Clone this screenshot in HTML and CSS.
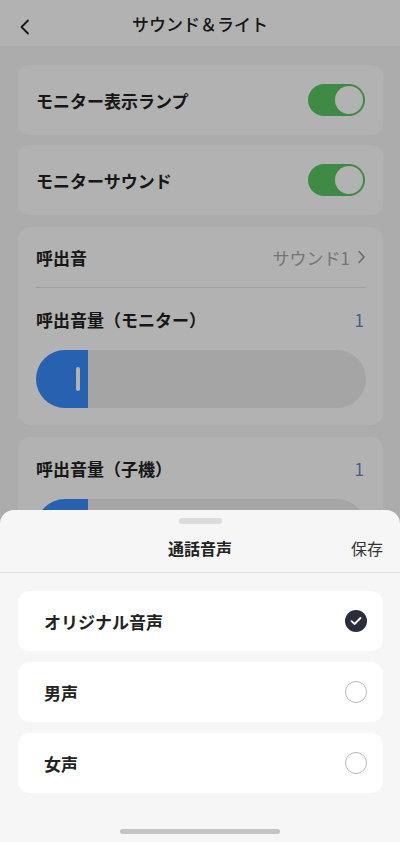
FILE: index.html
```html
<!DOCTYPE html>
<html lang="ja">
<head>
    <meta charset="UTF-8">
    <meta name="viewport" content="width=device-width, initial-scale=1.0">
    <title>サウンド＆ライト</title>
    <link rel="stylesheet" href="styles.css">
</head>
<body>
    <div class="screen">
        <header class="topbar">
            <span class="back">
                <svg width="12" height="16" viewBox="0 0 12 16"><path d="M9 1.5 L2.5 8 L9 14.5" fill="none" stroke="#222" stroke-width="1.8" stroke-linecap="round" stroke-linejoin="round"/></svg>
            </span>
            <h1>サウンド＆ライト</h1>
        </header>

        <main class="content">
            <div class="card row switch-card">
                <span class="label">モニター表示ランプ</span>
                <span class="toggle on"><span class="knob"></span></span>
            </div>

            <div class="card row">
                <span class="label">モニターサウンド</span>
                <span class="toggle on"><span class="knob"></span></span>
            </div>

            <div class="card group">
                <div class="row link-row">
                    <span class="label">呼出音</span>
                    <span class="value">サウンド1
                        <svg width="9" height="14" viewBox="0 0 9 14"><path d="M2 1.5 L7 7 L2 12.5" fill="none" stroke="#9a9a9a" stroke-width="1.6" stroke-linecap="round" stroke-linejoin="round"/></svg>
                    </span>
                </div>
                <div class="row level-row">
                    <span class="label">呼出音量（モニター）</span>
                    <span class="level">1</span>
                </div>
                <div class="slider">
                    <div class="fill" style="width: 52px"><span class="thumb"></span></div>
                </div>
            </div>

            <div class="card group">
                <div class="row level-row">
                    <span class="label">呼出音量（子機）</span>
                    <span class="level">1</span>
                </div>
                <div class="slider">
                    <div class="fill" style="width: 52px"><span class="thumb"></span></div>
                </div>
            </div>
        </main>

        <div class="dim"></div>

        <section class="sheet">
            <div class="handle"></div>
            <div class="sheet-head">
                <h2>通話音声</h2>
                <span class="save">保存</span>
            </div>
            <div class="options">
                <div class="option">
                    <span class="label">オリジナル音声</span>
                    <span class="radio checked">
                        <svg width="12" height="10" viewBox="0 0 12 10"><path d="M1.5 5.2 L4.6 8 L10.5 2" fill="none" stroke="#fff" stroke-width="1.8" stroke-linecap="round" stroke-linejoin="round"/></svg>
                    </span>
                </div>
                <div class="option">
                    <span class="label">男声</span>
                    <span class="radio"></span>
                </div>
                <div class="option">
                    <span class="label">女声</span>
                    <span class="radio"></span>
                </div>
            </div>
            <div class="home-bar"></div>
        </section>
    </div>
</body>
</html>
```

FILE: styles.css
```css
* {
    box-sizing: border-box;
}

body {
    margin: 0;
    font-family: "Noto Sans CJK JP", "Noto Sans", sans-serif;
    color: #222;
    background-color: #f6f6f6;
}

.screen {
    position: relative;
    width: 400px;
    height: 842px;
    overflow: hidden;
}

.topbar {
    position: relative;
    height: 46px;
    background-color: #fff;
    display: flex;
    align-items: center;
    justify-content: center;
}

.topbar h1 {
    margin: 0;
    font-size: 17px;
    font-weight: 500;
    color: #222;
}

.back {
    position: absolute;
    left: 19px;
    top: 16px;
}

.content {
    padding: 19px 17px 0 18px;
}

.card {
    background-color: #fff;
    border-radius: 12px;
    margin-bottom: 12px;
}

.switch-card {
    margin-bottom: 10px;
}

.row {
    display: flex;
    align-items: center;
    justify-content: space-between;
}

.card.row {
    height: 70px;
    padding: 0 18px;
}

.label {
    font-size: 17px;
    font-weight: 700;
    color: #222;
}

.toggle {
    width: 57px;
    height: 32px;
    border-radius: 16px;
    background-color: #5bc864;
    display: flex;
    align-items: center;
    justify-content: flex-end;
    padding: 0 2px;
}

.knob {
    width: 28px;
    height: 28px;
    border-radius: 50%;
    background-color: #fff;
}

.group {
    padding: 0 17px 17px 18px;
}

.link-row {
    height: 61px;
    border-bottom: 1px solid #e6e6e6;
}

.value {
    display: flex;
    align-items: center;
    gap: 7px;
    font-size: 17px;
    color: #a8a8a8;
}

.level-row {
    height: 62px;
}

.level {
    font-size: 17px;
    color: #6b86c6;
    padding-right: 2px;
}

.slider {
    height: 58px;
    border-radius: 29px;
    background-color: #ececec;
    overflow: hidden;
}

.fill {
    height: 100%;
    background-color: #398cfb;
    display: flex;
    align-items: center;
    justify-content: flex-end;
    padding-right: 8px;
}

.thumb {
    width: 4px;
    height: 24px;
    border-radius: 2px;
    background-color: #fff;
}

.dim {
    position: absolute;
    inset: 0;
    background-color: rgba(0, 0, 0, 0.3);
}

.sheet {
    position: absolute;
    left: 0;
    right: 0;
    bottom: 0;
    height: 332px;
    background-color: #f6f6f6;
    border-radius: 14px 14px 0 0;
}

.handle {
    width: 43px;
    height: 6px;
    border-radius: 3px;
    background-color: #dcdcdc;
    margin: 8px auto 0;
}

.sheet-head {
    position: relative;
    height: 49px;
    border-bottom: 1px solid #dedede;
    display: flex;
    align-items: center;
    justify-content: center;
}

.sheet-head h2 {
    margin: 0;
    font-size: 16px;
    font-weight: 700;
    color: #222;
}

.save {
    position: absolute;
    right: 17px;
    top: 12px;
    font-size: 16px;
    color: #333;
}

.options {
    padding: 18px 17px 0 18px;
    display: flex;
    flex-direction: column;
    gap: 11px;
}

.option {
    height: 60px;
    background-color: #fff;
    border-radius: 12px;
    display: flex;
    align-items: center;
    justify-content: space-between;
    padding: 0 16px 0 26px;
}

.radio {
    width: 22px;
    height: 22px;
    border-radius: 50%;
    border: 1px solid #b8b8b8;
    display: flex;
    align-items: center;
    justify-content: center;
}

.radio.checked {
    border: none;
    background-color: #2a2e3a;
}

.home-bar {
    position: absolute;
    left: 120px;
    bottom: 8px;
    width: 160px;
    height: 5px;
    border-radius: 3px;
    background-color: #c4c4c4;
}
```
